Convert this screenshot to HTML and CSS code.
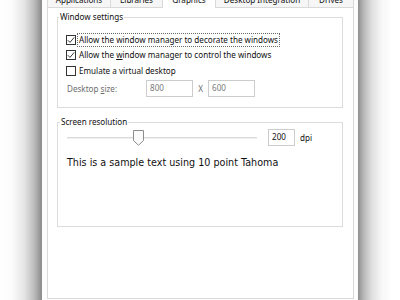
FILE: index.html
```html
<!DOCTYPE html>
<html lang="en">
<head>
    <meta charset="UTF-8">
    <title>Graphics settings</title>
    <link rel="stylesheet" href="styles.css">
</head>
<body>
    <div class="shade-left"></div>

    <div class="window">
        <div class="tabs">
            <div class="tab tab-apps">Applications</div>
            <div class="tab tab-libs">Libraries</div>
            <div class="tab tab-gfx active">Graphics</div>
            <div class="tab tab-desk">Desktop Integration</div>
            <div class="tab tab-drives">Drives</div>
        </div>

        <div class="panel">
            <div class="group group-window">
                <div class="group-title">Window settings</div>
                <div class="checks">
                    <div class="check-row">
                        <span class="box">
                            <svg width="8" height="8" viewBox="0 0 8 8"><path d="M0.8 4.2 L3 6.4 L7.2 1.4" fill="none" stroke="#222" stroke-width="0.9"/></svg>
                        </span>
                        <span class="check-label focused">Allow the window manager to decorate the windows</span>
                    </div>
                    <div class="check-row">
                        <span class="box">
                            <svg width="8" height="8" viewBox="0 0 8 8"><path d="M0.8 4.2 L3 6.4 L7.2 1.4" fill="none" stroke="#222" stroke-width="0.9"/></svg>
                        </span>
                        <span class="check-label">Allow the <u>w</u>indow manager to control the windows</span>
                    </div>
                    <div class="check-row">
                        <span class="box"></span>
                        <span class="check-label">Emulate a virtual desktop</span>
                    </div>
                </div>
                <div class="size-row">
                    <span class="size-label">Desktop <u>s</u>ize:</span>
                    <span class="field disabled">800</span>
                    <span class="times">X</span>
                    <span class="field disabled">600</span>
                </div>
            </div>

            <div class="group group-res">
                <div class="group-title">Screen resolution</div>
                <div class="dpi-row">
                    <div class="slider">
                        <div class="track"></div>
                        <svg class="thumb" width="11" height="16" viewBox="0 0 11 16">
                            <path d="M0.5 0.5 H10.5 V10.5 L5.5 15.3 L0.5 10.5 Z" fill="#fbfbfb" stroke="#8d8d8d"/>
                        </svg>
                    </div>
                    <span class="field dpi-field">200</span>
                    <span class="dpi-unit">dpi</span>
                </div>
                <p class="sample">This is a sample text using 10 point Tahoma</p>
            </div>
        </div>
    </div>

    <div class="shade-right"></div>
</body>
</html>
```

FILE: styles.css
```css
html, body { margin: 0; height: 300px; overflow: hidden; }
body { display: flex; width: 400px; background: #fff; font-family: "Noto Sans", "Open Sans", sans-serif; font-size: 8.1px; color: #111; }

.shade-left { width: 42px; flex: none; background: linear-gradient(to right, #fff 0, #fbfbfb 12px, #e6e6e6 24px, #bdbdbd 34px, #8f8f8f 41px, #8f8f8f 42px); }
.shade-right { flex: 1; background: linear-gradient(to right, #8f8f8f 0, #b9b9b9 6px, #e0e0e0 14px, #f7f7f7 24px, #fff 34px); }

.window { width: 316px; flex: none; background: #fdfdfd; padding-left: 5px; box-sizing: border-box; }

.tabs { display: flex; height: 7px; align-items: flex-end; }
.tab { flex: none; height: 18px; box-sizing: border-box; border: 1px solid #d9d9d9; border-bottom: none; margin-right: -1px; background: #f6f6f6; display: flex; align-items: flex-end; justify-content: center; line-height: 10px; padding-bottom: 2px; white-space: nowrap; }
.tab-apps { width: 64px; }
.tab-libs { width: 53px; }
.tab-gfx { width: 54px; }
.tab-desk { width: 94px; }
.tab-drives { width: 46px; }
.tab.active { background: #fff; height: 19px; margin-bottom: -1px; padding-bottom: 3px; position: relative; z-index: 1; }

.panel { width: 307px; height: 292px; box-sizing: border-box; border: 1px solid #d9d9d9; background: #fff; padding: 9px 10px 0 9px; }

.group { border: 1px solid #dcdcdc; padding: 0 8px; box-sizing: border-box; }
.group-title { width: fit-content; height: 14px; line-height: 14px; margin: -8px 0 0 -7px; padding: 0 1px; background: #fff; }
.group-window { height: 91px; }
.group-res { height: 105px; margin-top: 14px; padding-left: 9px; }

.checks { padding-top: 8px; }
.check-row { display: flex; align-items: center; height: 15.5px; }
.box { width: 10px; height: 10px; box-sizing: border-box; border: 1px solid #333; background: #fff; flex: none; display: flex; align-items: center; justify-content: center; }
.box svg { flex: none; }
.check-label { margin-left: 1px; padding: 0 1px; border: 1px dotted transparent; line-height: 12px; white-space: nowrap; }
.check-label.focused { border-color: #6a6a6a; }

.size-row { display: flex; align-items: center; margin-top: 1.5px; color: #6d6d6d; }
.size-label { width: 80px; padding-left: 1px; box-sizing: border-box; }
.field { display: block; height: 17px; box-sizing: border-box; border: 1px solid #cccccc; padding: 0 3px; line-height: 14px; background: #fff; }
.field.disabled { width: 47px; color: #7a7a7a; }
.times { width: 15px; text-align: center; }

.dpi-row { display: flex; align-items: center; height: 17px; }
.slider { width: 190px; height: 17px; position: relative; flex: none; }
.track { height: 1px; margin-top: 8px; background: #dadada; border-bottom: 1px solid #f0f0f0; }
.thumb { position: absolute; left: 66px; top: 1px; }
.dpi-field { width: 27px; margin-left: 11px; color: #111; }
.dpi-unit { margin-left: 5px; }

.sample { margin: 10px 0 0 0; font-family: "DejaVu Sans", sans-serif; font-size: 9.6px; line-height: 13px; color: #111; }
```
